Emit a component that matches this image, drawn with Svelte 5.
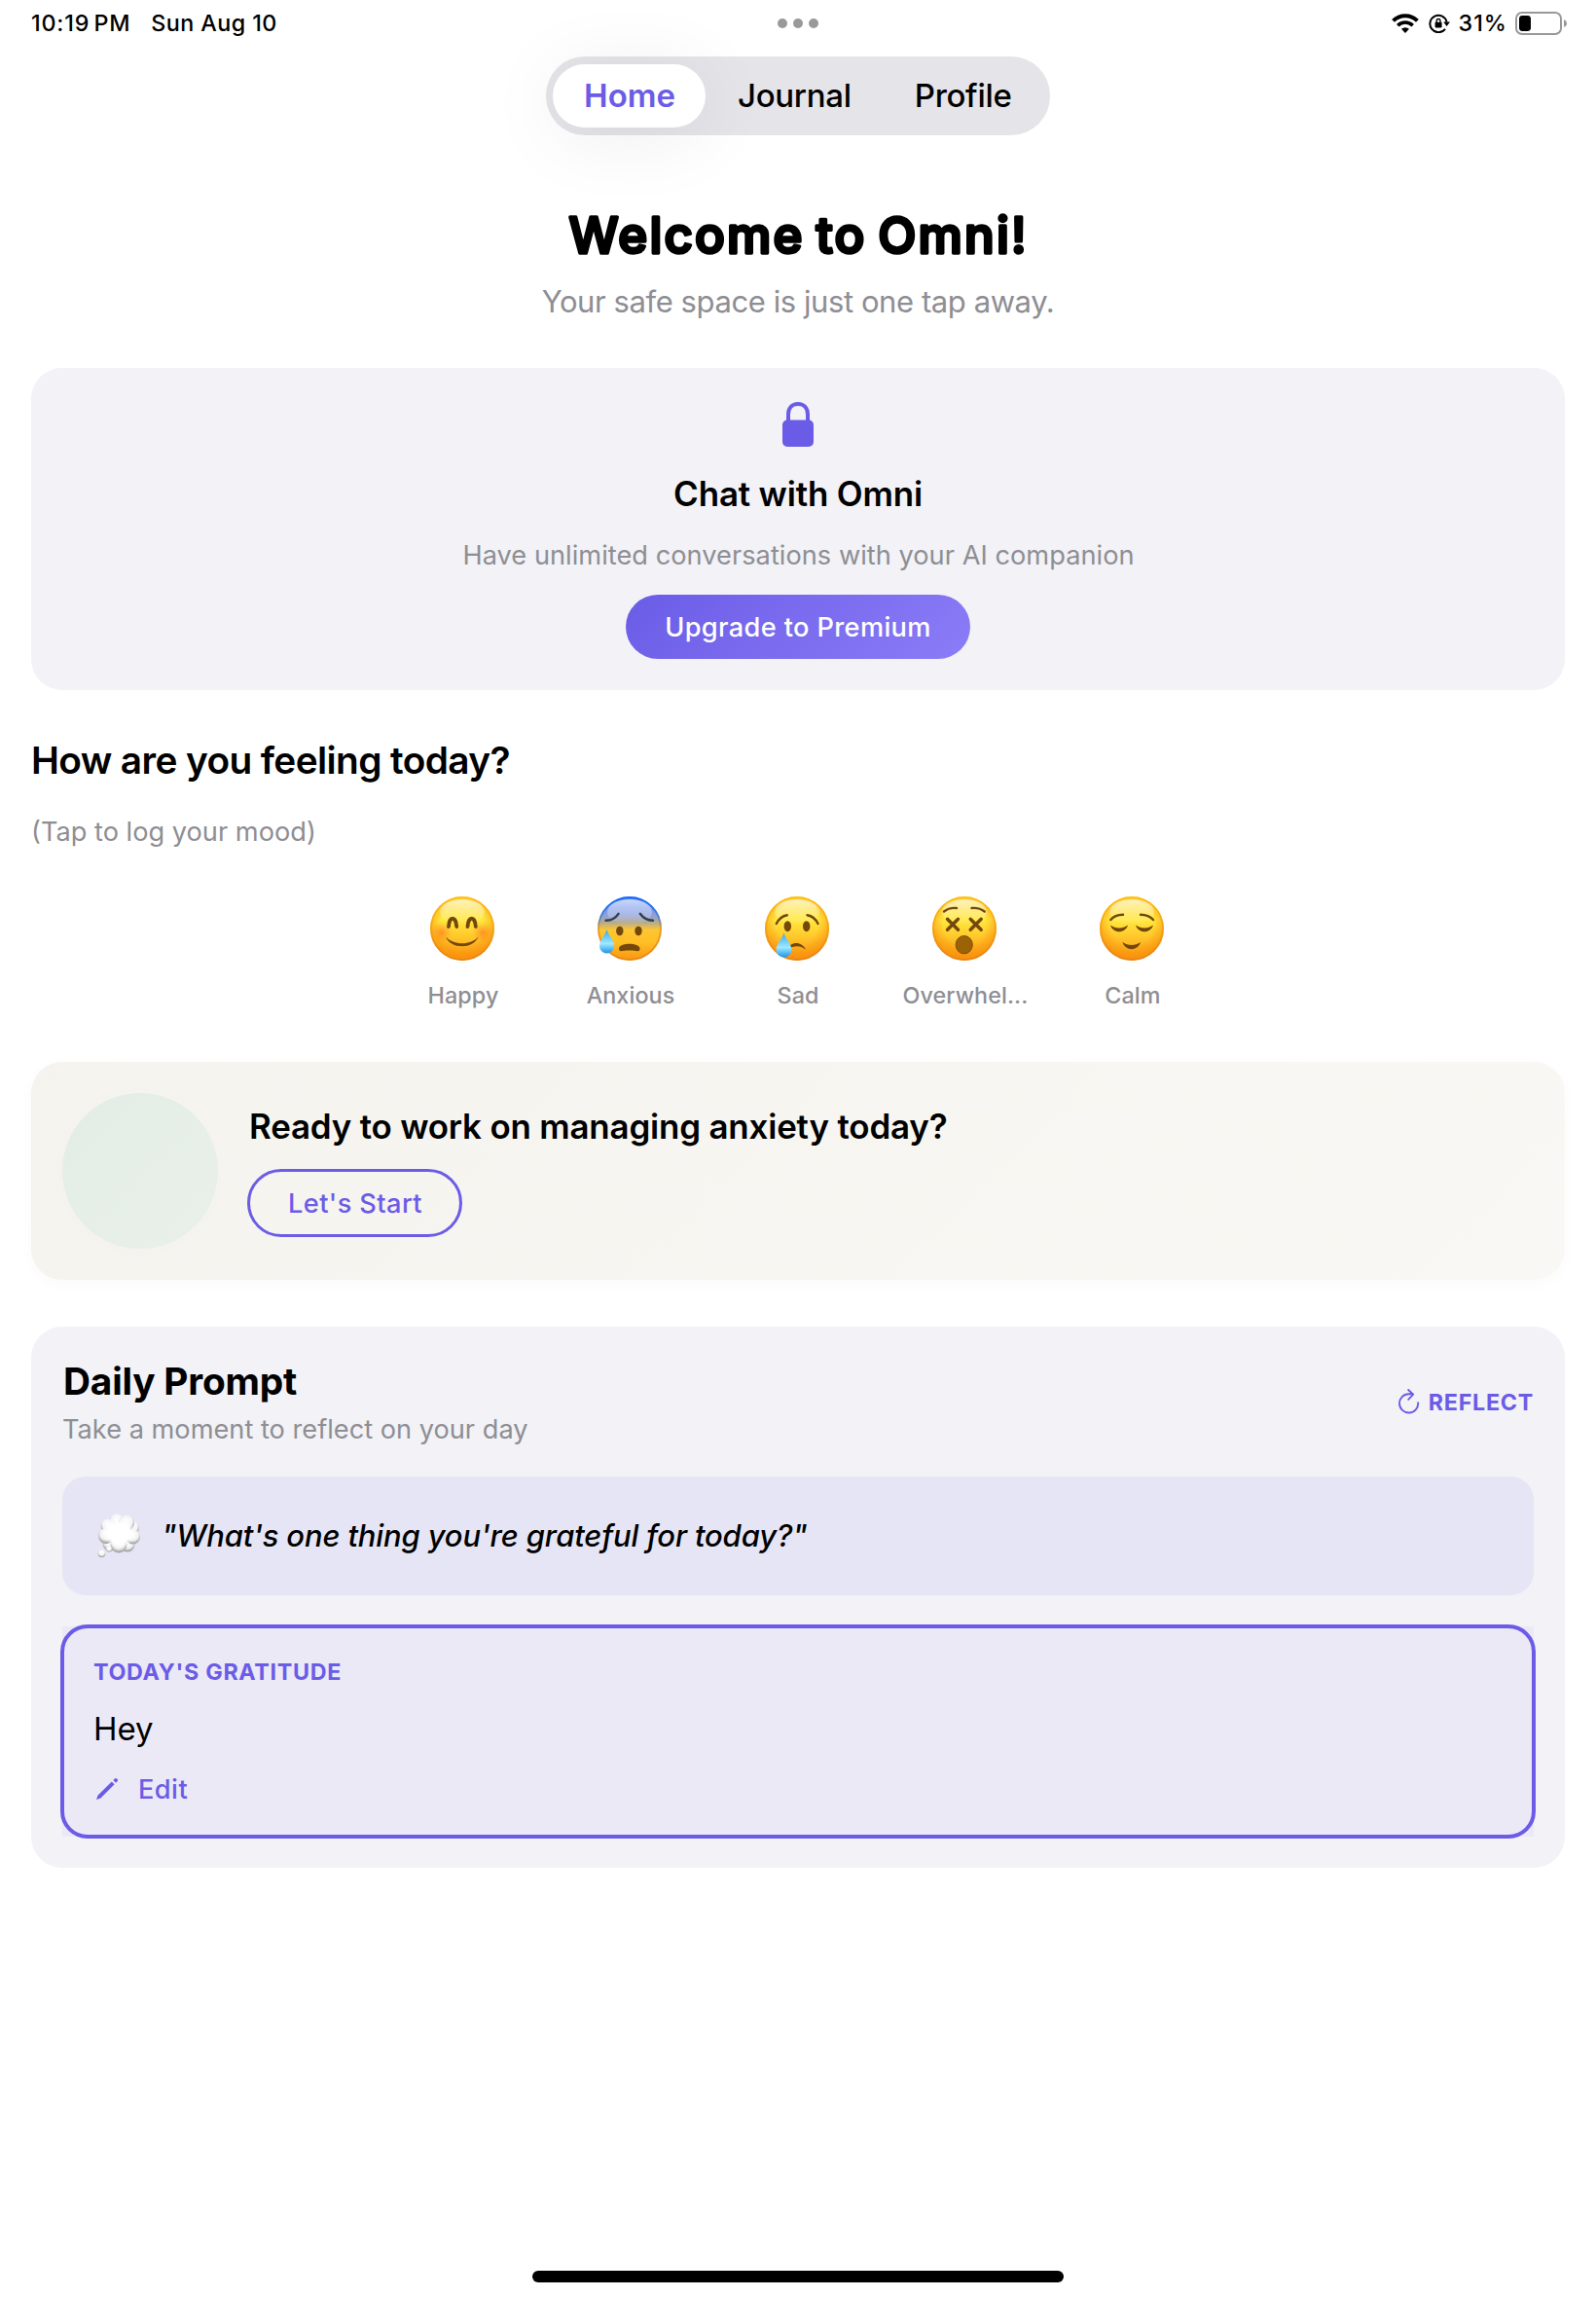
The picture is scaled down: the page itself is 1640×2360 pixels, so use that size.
<script>
  const tabs = ['Home', 'Journal', 'Profile'];
  const moods = [
    { id: 'happy', label: 'Happy' },
    { id: 'anxious', label: 'Anxious' },
    { id: 'sad', label: 'Sad' },
    { id: 'overwhelmed', label: 'Overwhel...' },
    { id: 'calm', label: 'Calm' }
  ];
  let active = $state('Home');
</script>

{#snippet face(id)}
  <svg class="face" viewBox="0 0 66 66" aria-hidden="true">
    <circle cx="33" cy="33" r="32.8" fill={id === 'anxious' ? 'url(#worry)' : 'url(#skin)'} />
    {#if id !== 'anxious'}
      <circle cx="33" cy="33" r="32.8" fill="url(#edge)" />
    {/if}
    <circle cx="33" cy="33" r="32" fill="none" stroke={id === 'anxious' ? 'url(#worryRim)' : 'url(#rim)'} stroke-width="2" opacity=".8" />
    <ellipse cx="33" cy="16" rx="23" ry="13" fill="url(#shine)" />
    {#if id === 'happy'}
      <circle cx="12" cy="37" r="11" fill="url(#cheek)" />
      <circle cx="54" cy="37" r="11" fill="url(#cheek)" />
      <g class="line eyes">
        <path d="M19 31C19.5 20 26.5 20 27.2 31" />
        <path d="M38.5 31C39.2 20 46.2 20 46.8 31" />
      </g>
      <path class="ink" d="M16 41.5C21 54.5 44.5 54.5 49.5 41.5C42 50.5 24 50.5 16 41.5Z" />
    {:else if id === 'anxious'}
      <g class="line worried">
        <path d="M8.5 24.8Q17 24.5 21.5 17.8" />
        <path d="M43.8 17.8Q48.5 24.5 57 24.8" />
      </g>
      <ellipse class="ink" cx="22.8" cy="35.5" rx="3.7" ry="4.8" />
      <ellipse class="ink" cx="42" cy="35.5" rx="3.7" ry="4.8" />
      <path class="ink" d="M22 53.5C22 47 43.5 47 43.5 53.5C43.5 58 40 55.5 32.7 55.5S22 58 22 53.5Z" />
      <path d="M9.5 34C11 40 17.2 45 17.2 51A7.6 7.4 0 0 1 2 51C2 45 8 40 9.5 34Z" fill="url(#tear)" />
    {:else if id === 'sad'}
      <g class="line">
        <path d="M22.8 19.2Q15.5 20.5 11.8 28" />
        <path d="M43.5 19.2Q51 20.5 54.5 28" />
      </g>
      <ellipse class="ink" cx="23.3" cy="30.7" rx="3.7" ry="5.5" />
      <ellipse class="ink" cx="42.7" cy="30.7" rx="3.7" ry="5.5" />
      <path class="ink" d="M23 54.5C26 46 38 45.5 42 54.8C36 50 30 50.5 23 54.5Z" />
      <path d="M19.5 37.5C21 44 27.5 48.5 27.5 55A8 7.5 0 0 1 11.5 55C11.5 48.5 18 44 19.5 37.5Z" fill="url(#tear)" />
    {:else if id === 'overwhelmed'}
      <g class="line">
        <path d="M12 15.5Q17.5 11.2 25 12" />
        <path d="M40.5 12Q48 11.2 53.7 15.5" />
        <g class="cross">
          <path d="M15.5 23.3L26.5 34.3M26.5 23.3L15.5 34.3" />
          <path d="M39.2 23.3L50.2 34.3M50.2 23.3L39.2 34.3" />
        </g>
      </g>
      <ellipse cx="32.7" cy="49.7" rx="8.6" ry="9.2" fill="#9c6206" stroke="#7d4b07" />
    {:else}
      <g class="line">
        <path d="M11.3 24Q15.5 18.8 24 18.7" />
        <path d="M42 18.7Q50.5 18.8 55 24" />
      </g>
      <path class="ink" d="M11 29.5C13.5 38.5 26.5 38.5 29 29.5C23.5 33.5 16.5 33.5 11 29.5Z" />
      <path class="ink" d="M37 29.5C39.5 38.5 52.5 38.5 55 29.5C49.5 33.5 42.5 33.5 37 29.5Z" />
      <path class="ink" d="M23.5 47C26 56.5 39.5 56.5 42 47C36.5 51 29 51 23.5 47Z" />
    {/if}
  </svg>
{/snippet}

<svg class="defs" aria-hidden="true">
  <defs>
    <linearGradient id="skin" x1="0" y1="0" x2="0" y2="1">
      <stop offset="0" stop-color="#ffd62e" />
      <stop offset=".36" stop-color="#ffe93e" />
      <stop offset=".6" stop-color="#ffcb2d" />
      <stop offset="1" stop-color="#f9960f" />
    </linearGradient>
    <radialGradient id="edge" cx=".5" cy=".42" r=".6">
      <stop offset=".55" stop-color="#f98d0a" stop-opacity="0" />
      <stop offset="1" stop-color="#f98d0a" stop-opacity=".85" />
    </radialGradient>
    <linearGradient id="rim" x1="0" y1="0" x2="0" y2="1">
      <stop offset="0" stop-color="#ffbe12" />
      <stop offset="1" stop-color="#e67f18" />
    </linearGradient>
    <linearGradient id="worry" x1="0" y1="0" x2="0" y2="1">
      <stop offset="0" stop-color="#4a7cf5" />
      <stop offset=".28" stop-color="#8c9fdf" />
      <stop offset=".4" stop-color="#b3a993" />
      <stop offset=".52" stop-color="#fcc633" />
      <stop offset=".72" stop-color="#ffbe25" />
      <stop offset="1" stop-color="#f9960f" />
    </linearGradient>
    <linearGradient id="worryRim" x1="0" y1="0" x2="0" y2="1">
      <stop offset="0" stop-color="#0a63ff" />
      <stop offset=".3" stop-color="#2f78d8" />
      <stop offset=".5" stop-color="#e8971c" />
      <stop offset="1" stop-color="#e67f18" />
    </linearGradient>
    <linearGradient id="shine" x1="0" y1="0" x2="0" y2="1">
      <stop offset="0" stop-color="#fff" stop-opacity=".68" />
      <stop offset="1" stop-color="#fff" stop-opacity="0" />
    </linearGradient>
    <radialGradient id="cheek">
      <stop offset="0" stop-color="#ff6a1e" stop-opacity=".6" />
      <stop offset="1" stop-color="#ff8a1e" stop-opacity="0" />
    </radialGradient>
    <linearGradient id="tear" x1="0" y1="0" x2="0" y2="1">
      <stop offset="0" stop-color="#2fa9ee" />
      <stop offset=".6" stop-color="#9fe8ff" />
      <stop offset="1" stop-color="#1a94ea" />
    </linearGradient>
    <radialGradient id="puff" cx=".5" cy=".36" r=".62">
      <stop offset="0" stop-color="#fff" />
      <stop offset=".6" stop-color="#f3f3f3" />
      <stop offset="1" stop-color="#98989c" />
    </radialGradient>
    <radialGradient id="core">
      <stop offset=".65" stop-color="#fff" />
      <stop offset="1" stop-color="#fff" stop-opacity="0" />
    </radialGradient>
  </defs>
</svg>

<div class="screen">
  <header class="status">
    <div class="left"><span class="time">10:19 PM</span><span class="date">Sun Aug 10</span></div>
    <div class="dots"><i></i><i></i><i></i></div>
    <div class="right">
      <svg class="wifi" viewBox="0 0 28 20">
        <path d="M1.6 7.4a17.5 17.5 0 0 1 24.8 0" fill="none" stroke="#000" stroke-width="4" />
        <path d="M6.3 12.3a10.8 10.8 0 0 1 15.4 0" fill="none" stroke="#000" stroke-width="3.6" />
        <path d="M14 20l-4-4.2a6 6 0 0 1 8 0z" />
      </svg>
      <svg class="orient" viewBox="0 0 22 20">
        <path d="M17 15.8A8.7 8.7 0 1 1 18.6 8.6" fill="none" stroke="#000" stroke-width="2" />
        <path d="M15.2 8.4h6.8l-3.4 4.6z" />
        <rect x="6.6" y="8.8" width="7" height="5.6" rx=".8" />
        <path d="M8.2 9V7.4a1.9 1.9 0 0 1 3.8 0V9" fill="none" stroke="#000" stroke-width="1.3" />
      </svg>
      <span class="pct">31%</span>
      <svg class="battery" viewBox="0 0 53 24">
        <rect x="1" y="1" width="46" height="22" rx="6" fill="none" stroke="#999" stroke-width="2" />
        <rect x="4" y="4" width="12" height="16" rx="3.4" />
        <path d="M50 8.2c2 .5 3 2 3 3.8s-1 3.3-3 3.8z" fill="#999" />
      </svg>
    </div>
  </header>

  <nav class="tabs">
    {#each tabs as tab}
      <button class="tab" class:active={tab === active} onclick={() => (active = tab)}>{tab}</button>
    {/each}
  </nav>

  <main>
    <section class="hero">
      <h1>
        <svg class="title" viewBox="0 0 520 68">
          <text x="259.5" y="52.5" text-anchor="middle" textLength="470">Welcome to Omni!</text>
        </svg>
      </h1>
      <p class="sub">Your safe space is just one tap away.</p>
    </section>

    <section class="card chat">
      <svg class="lock" viewBox="0 0 32 46">
        <rect y="18.6" width="32" height="27.4" rx="5" />
        <path d="M6 20V13C6 6 10 2 16 2S26 6 26 13V20" fill="none" stroke="#6b5ce7" stroke-width="4" />
      </svg>
      <h2 class="chat-title">Chat with Omni</h2>
      <p class="small">Have unlimited conversations with your AI companion</p>
      <button class="upgrade">Upgrade to Premium</button>
    </section>

    <section class="feeling">
      <h2 class="feel-title">How are you feeling today?</h2>
      <p class="small">(Tap to log your mood)</p>
      <div class="moods">
        {#each moods as mood}
          <div class="mood">
            {@render face(mood.id)}
            <span class="label">{mood.label}</span>
          </div>
        {/each}
      </div>
    </section>

    <section class="ready">
      <div class="orb"></div>
      <div class="ready-body">
        <h2 class="ready-title">Ready to work on managing anxiety today?</h2>
        <button class="start">Let's Start</button>
      </div>
    </section>

    <section class="card daily">
      <div class="daily-head">
        <div>
          <h2 class="daily-title">Daily Prompt</h2>
          <p class="small">Take a moment to reflect on your day</p>
        </div>
        <button class="reflect">
          <svg viewBox="0 0 22 26">
            <path d="M20.2 14.3A9.6 9.6 0 1 1 10.6 5.3H15M10.2 1L15.2 5.7L10.2 10.8" />
          </svg>
          REFLECT
        </button>
      </div>
      <div class="prompt">
        <svg class="bubble" viewBox="0 0 44 46">
          <g fill="url(#puff)">
            <circle cx="13" cy="31" r="7.5" />
            <circle cx="31" cy="32" r="7.5" />
            <circle cx="36" cy="15" r="7" />
            <circle cx="36.5" cy="24" r="7.5" />
            <circle cx="20" cy="8" r="7.5" />
            <circle cx="11" cy="13" r="7.5" />
            <circle cx="9" cy="23" r="8" />
            <circle cx="30" cy="10" r="8" />
            <circle cx="22" cy="32" r="8.5" />
          </g>
          <ellipse cx="22.5" cy="20" rx="17" ry="15" fill="url(#core)" />
          <circle cx="12" cy="36.5" r="3" fill="url(#puff)" />
          <circle cx="4.5" cy="41" r="3.9" fill="url(#puff)" />
        </svg>
        <p class="quote">"What's one thing you're grateful for today?"</p>
      </div>
      <div class="gratitude">
        <span class="caps">TODAY'S GRATITUDE</span>
        <p class="hey">Hey</p>
        <button class="edit">
          <svg viewBox="0 0 24 24">
            <path d="M1 23L2.6 18.6L16.8 4.4L19.6 7.2L5.4 21.4Z" />
            <path d="M18.3 3L20.2 1.2Q21.2 .6 22 1.4L22.7 2.1Q23.4 3 22.7 3.9L21 5.7Z" />
          </svg>
          Edit
        </button>
      </div>
    </section>
  </main>
  <div class="home-indicator"></div>
</div>

<style>
  :global(body) { margin: 0; background: #fff; }
  .defs { position: absolute; width: 0; height: 0; }
  .screen {
    display: flex;
    flex-direction: column;
    width: 1640px;
    height: 2360px;
    box-sizing: border-box;
    font-family: Inter, 'Liberation Sans', sans-serif;
    color: #000;
    background: #fff;
    overflow: hidden;
  }
  svg { display: block; flex: none; }
  h1, h2, p { margin: 0; }
  button { border: 0; padding: 0; margin: 0; background: none; font: inherit; color: inherit; white-space: nowrap; }

  .status {
    display: grid;
    grid-template-columns: 1fr auto 1fr;
    align-items: center;
    height: 48px;
    margin-bottom: 10px;
    padding: 0 30px 0 32px;
    font-size: 23.3px;
    font-weight: 500;
    line-height: 47px;
    flex: none;
  }
  .left, .right { display: flex; align-items: center; }
  .left, .pct { margin-top: -1px; }
  .right { justify-content: flex-end; }
  .time { letter-spacing: .8px; word-spacing: -2.6px; }
  .date { margin-left: 21px; letter-spacing: .43px; }
  .pct { letter-spacing: 1px; margin-left: 9px; margin-right: 8px; }
  .dots { display: flex; gap: 6px; margin-right: 2px; }
  .dots i { width: 10px; height: 10px; border-radius: 50%; background: #999; }
  .wifi { width: 28px; height: 20px; margin-right: 10px; }
  .orient { width: 22px; height: 20px; }
  .battery { width: 53px; height: 24px; }

  .tabs {
    display: flex;
    align-self: center;
    box-sizing: border-box;
    width: 518px;
    height: 81px;
    padding: 8px 7px;
    border-radius: 40px;
    background: #e5e4e9;
    font-size: 33px;
    font-weight: 500;
    flex: none;
  }
  .tab { flex: none; height: 65px; padding: 0 32px 2px 33px; border-radius: 33px; letter-spacing: -.3px; }
  .tab.active {
    width: 157px;
    padding: 0 0 2px 1px;
    background: #fff;
    color: #6b5ce7;
    font-weight: 600;
    letter-spacing: 0;
    box-shadow: 0 8px 80px rgba(0, 0, 0, .08);
  }

  main { display: flex; flex-direction: column; padding: 0 32px; flex: 1; }
  .hero { display: flex; flex-direction: column; align-items: center; padding: 68px 0 48px; }
  .title { width: 520px; height: 68px; overflow: visible; }
  .title text {
    font-size: 51px;
    font-weight: 500;
    word-spacing: -4px;
    stroke: #000;
    stroke-width: 3.3px;
    stroke-linejoin: round;
  }
  .sub { margin-top: 15px; font-size: 31px; line-height: 40px; letter-spacing: -.42px; color: #8e8e93; }

  .card { border-radius: 32px; background: #f2f2f7; }
  .small { font-size: 27.2px; line-height: 36px; color: #8e8e93; }
  .chat { display: flex; flex-direction: column; align-items: center; height: 331px; padding-top: 35px; box-sizing: border-box; }
  .lock { width: 32px; height: 46px; fill: #6b5ce7; }
  .chat-title { margin-top: 26px; font-size: 34.9px; line-height: 44px; font-weight: 600; letter-spacing: -.15px; }
  .chat .small { margin-top: 24px; padding-left: 1px; letter-spacing: .03px; }
  .upgrade {
    width: 354px;
    height: 66px;
    margin-top: 22px;
    border-radius: 33px;
    background: linear-gradient(135deg, #6b5ce7, #8b7cf8);
    color: #fff;
    font-size: 27.2px;
    font-weight: 500;
    letter-spacing: .36px;
  }

  .feeling { padding-top: 48px; height: 334px; }
  .feel-title { font-size: 38.8px; line-height: 48px; font-weight: 600; letter-spacing: -.61px; }
  .feeling .small { margin-top: 32px; }
  .moods { display: flex; justify-content: center; gap: 44px; margin-top: 48px; padding-right: 2px; }
  .mood { display: flex; flex-direction: column; align-items: center; width: 128px; }
  .face { width: 66px; height: 66px; }
  .ink { fill: #74470a; }
  .line { fill: none; stroke: #74470a; stroke-width: 2.4; stroke-linecap: round; }
  .worried { stroke: #2b4350; }
  .eyes { stroke-width: 3.8; }
  .cross { stroke-width: 3.4; }
  .label { margin-top: 20px; padding-left: 2px; font-size: 23.3px; line-height: 32px; font-weight: 500; letter-spacing: .1px; color: #8e8e93; white-space: nowrap; }

  .ready {
    display: flex;
    align-items: center;
    box-sizing: border-box;
    height: 224px;
    padding: 0 32px;
    border-radius: 32px;
    background: linear-gradient(135deg, #f5f3ee, #f9f8f4);
    box-shadow: 0 4px 16px rgba(0, 0, 0, .022);
  }
  .orb {
    width: 160px;
    height: 160px;
    border-radius: 50%;
    background: linear-gradient(135deg, #e2ede5, #eaf0ea);
    box-shadow: 0 4px 16px rgba(0, 0, 0, .012);
  }
  .ready-body { margin-left: 30px; }
  .ready-title { margin: 0 0 22px 2px; font-size: 34.9px; line-height: 44px; font-weight: 600; letter-spacing: -.17px; }
  .start {
    display: block;
    box-sizing: border-box;
    width: 221px;
    height: 70px;
    border: 3px solid #6b5ce7;
    border-radius: 35px;
    color: #6b5ce7;
    font-size: 27.2px;
    font-weight: 500;
    letter-spacing: .4px;
    padding: 0 0 0 1px;
  }

  .daily { margin-top: 48px; height: 556px; padding: 32px; box-sizing: border-box; }
  .daily-head { display: flex; justify-content: space-between; align-items: center; }
  .daily-title { padding-left: 1px; font-size: 38.8px; line-height: 48px; font-weight: 700; letter-spacing: -.2px; }
  .daily-head .small { margin-top: 8px; letter-spacing: 0; }
  .reflect { display: flex; align-items: center; gap: 9px; padding-bottom: 2px; color: #6b5ce7; font-size: 23.3px; font-weight: 700; letter-spacing: .7px; }
  .reflect svg { width: 22px; height: 26px; fill: none; stroke: #6b5ce7; stroke-width: 1.9; stroke-linecap: round; stroke-linejoin: round; }
  .prompt {
    display: flex;
    align-items: center;
    height: 122px;
    margin-top: 30px;
    padding-left: 36px;
    border-radius: 24px;
    background: #e6e5f5;
  }
  .bubble { width: 44px; height: 46px; }
  .quote { margin-left: 22px; font-size: 31px; line-height: 40px; font-style: italic; font-weight: 500; letter-spacing: -.14px; }
  .gratitude {
    position: relative;
    box-sizing: border-box;
    height: 216px;
    margin-top: 32px;
    padding: 32px;
    background: #ece9f7;
  }
  .gratitude::after {
    content: '';
    position: absolute;
    inset: -2px;
    border: 4px solid #6b5ce7;
    border-radius: 28px;
    pointer-events: none;
  }
  .caps { display: block; font-size: 23.3px; line-height: 29px; font-weight: 700; letter-spacing: .67px; color: #6b5ce7; }
  .hey { margin-top: 22px; font-size: 33px; line-height: 44px; }
  .edit { display: flex; align-items: center; gap: 20px; height: 36px; margin-top: 22px; padding-left: 2px; color: #6b5ce7; font-size: 27.2px; font-weight: 500; letter-spacing: .45px; }
  .edit svg { width: 24px; height: 24px; fill: #6b5ce7; }

  .home-indicator { align-self: center; flex: none; width: 546px; height: 12px; margin-bottom: 15px; border-radius: 6px; background: #000; }
</style>
